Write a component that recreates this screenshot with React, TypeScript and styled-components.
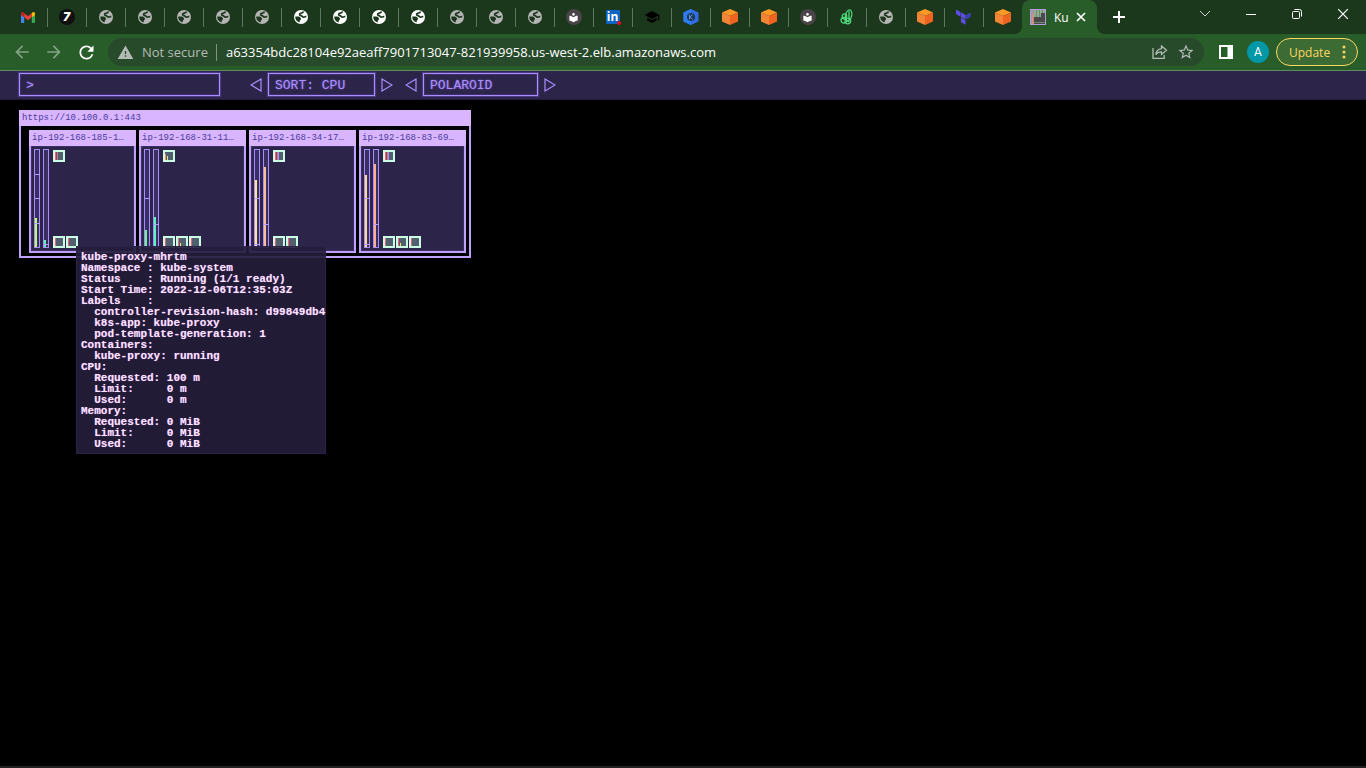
import React from "react";
import styled, { createGlobalStyle, css } from "styled-components";
import {
  MdArrowBack,
  MdArrowForward,
  MdLocalLibrary,
  MdRefresh,
  MdSchool,
  MdStarBorder,
  MdWarning,
} from "react-icons/md";

const GlobalStyle = createGlobalStyle`
  * { box-sizing: border-box; }
  html, body { margin: 0; background: #000; }
  button, input { font: inherit; color: inherit; background: none; border: 0; margin: 0; padding: 0; }
  button { cursor: pointer; }
  svg { display: block; flex: none; }
`;

const ui = `"Open Sans", "Noto Sans", sans-serif`;
const mono = `"Liberation Mono", "DejaVu Sans Mono", monospace`;

const Window = styled.div`
  min-height: 100vh;
  display: flex;
  flex-direction: column;
  font-family: ${ui};
  background: #000;
`;

/* ---------- browser tabs ---------- */

const TabStrip = styled.div`
  display: flex;
  height: 34px;
  padding-left: 8px;
  background: #1b381c;
`;

const Tab = styled.button<{ $last?: boolean }>`
  position: relative;
  flex: 0 1 39px;
  display: flex;
  align-items: center;
  justify-content: center;
  &::after {
    content: "";
    display: ${(p) => (p.$last ? "none" : "block")};
    position: absolute;
    right: -1px;
    top: 8px;
    width: 1px;
    height: 19px;
    background: #5d7a5e;
  }
`;

const corner = css`
  content: "";
  position: absolute;
  bottom: 0;
  width: 8px;
  height: 8px;
`;

const ActiveTab = styled.div`
  position: relative;
  display: flex;
  align-items: center;
  width: 75px;
  padding-left: 8px;
  border-radius: 8px 8px 0 0;
  background: #285d2a;
  color: #fff;
  font-size: 12px;
  &::before {
    ${corner}
    left: -8px;
    background: radial-gradient(circle at 0 0, transparent 8px, #285d2a 8px);
  }
  &::after {
    ${corner}
    right: -8px;
    background: radial-gradient(circle at 100% 0, transparent 8px, #285d2a 8px);
  }
`;

const TabTitle = styled.span`
  margin-left: 8px;
  width: 17px;
  white-space: nowrap;
`;

const TabIconButton = styled.button`
  display: flex;
  align-items: center;
  justify-content: center;
  width: 20px;
`;

const NewTab = styled.button`
  width: 28px;
  margin-left: 8px;
  display: flex;
  align-items: center;
  justify-content: center;
`;

const WindowButtons = styled.div`
  display: flex;
  margin-left: auto;
  height: 28px;
`;

const WindowButton = styled.button`
  width: 46px;
  display: flex;
  align-items: center;
  justify-content: center;
`;

const LinkedIn = styled.span`
  position: relative;
  width: 14px;
  height: 14px;
  border-radius: 1px;
  background: #0a66c2;
  color: #fff;
  font: bold 12px/14px "Open Sans", sans-serif;
  text-align: center;
  &::after {
    content: "";
    position: absolute;
    right: -1px;
    bottom: -1px;
    width: 4px;
    height: 4px;
    border-radius: 50%;
    background: #e01020;
  }
`;

const Disc = styled.span<{ $fill: string }>`
  width: 16px;
  height: 16px;
  border-radius: 50%;
  background: ${(p) => p.$fill};
  color: #fff;
  display: flex;
  align-items: center;
  justify-content: center;
  font: italic 900 12px/16px "Inter", sans-serif;
`;

/* ---------- browser toolbar ---------- */

const Toolbar = styled.div`
  display: flex;
  align-items: center;
  height: 37px;
  padding: 0 8px 0 6px;
  border-bottom: 1px solid #5d8a5f;
  background: #285d2a;
  color: #fff;
`;

const NavButton = styled.button<{ $dim?: boolean }>`
  width: 32px;
  height: 28px;
  display: flex;
  align-items: center;
  justify-content: center;
  color: ${(p) => (p.$dim ? "#82a283" : "#fff")};
`;

const AddressBar = styled.form`
  flex: 1;
  display: flex;
  align-items: center;
  height: 28px;
  margin: 0 6px;
  padding: 0 8px 0 9px;
  border-radius: 14px;
  background: #274a2a;
  color: #b4bbb6;
  font-size: 13px;
`;

const Security = styled.button`
  display: flex;
  align-items: center;
  gap: 8px;
  padding-right: 8px;
  margin-right: 9px;
  border-right: 1px solid #7f9481;
  line-height: 16px;
  white-space: nowrap;
`;

const Url = styled.input`
  flex: 1;
  min-width: 0;
  color: #fff;
  outline: 0;
`;

const AddressButton = styled.button`
  width: 32px;
  display: flex;
  justify-content: center;
  &:last-child {
    width: 20px;
  }
`;

const Avatar = styled.button`
  width: 22px;
  height: 22px;
  margin: 0 7px 0 5px;
  border-radius: 50%;
  background: #0097a7;
  font: 12px/22px Roboto, sans-serif;
  color: #fff;
`;

const UpdateButton = styled.button`
  display: flex;
  align-items: center;
  justify-content: space-between;
  width: 82px;
  height: 28px;
  padding: 0 11px 0 12px;
  border: 1px solid #fdd663;
  border-radius: 14px;
  background: #3c6b33;
  color: #fdd663;
  font-size: 12px;
`;

/* ---------- operational view ---------- */

const Menu = styled.div`
  display: flex;
  align-items: center;
  height: 29px;
  padding: 0 0 2px 19px;
  background: #2c2449;
  box-shadow: inset 0 -1px 0 #241c3c;
  font-family: ${mono};
  font-size: 13px;
  color: #aa8eff;
`;

const field = css`
  height: 23px;
  border: 1px solid #aa8eff;
  box-shadow: 0 0 1px 1px #4a3a80, inset 0 0 1px 1px #3f3270;
  text-shadow: 0 0 2px #7a5fd0;
  line-height: 21px;
  padding: 1px 6px 0;
`;

const Prompt = styled.input`
  && {
    ${field}
    width: 201px;
    margin-right: 28px;
    outline: 0;
  }
`;

const Picker = styled.div`
  display: flex;
  align-items: center;
  margin-right: 8px;
`;

const PickerValue = styled.output<{ $width: number }>`
  ${field}
  width: ${(p) => p.$width}px;
  margin: 0 4px;
`;

const Arrow = styled.button`
  display: flex;
  align-items: center;
  justify-content: center;
  width: 16px;
  height: 20px;
`;

const Board = styled.main`
  flex: 1;
  display: flex;
  align-items: flex-start;
  padding: 10px 19px;
  border-bottom: 2px solid #222;
  font-family: ${mono};
`;

const Cluster = styled.section`
  position: relative;
  border: 2px solid #c0a0ff;
  border-top: 0;
  background: #000;
`;

const Title = styled.h2`
  margin: 0 -2px;
  height: 16px;
  padding-left: 3px;
  background: #d9b5ff;
  color: #4b3c9e;
  font-size: 9px;
  font-weight: normal;
  line-height: 17px;
  white-space: nowrap;
`;

const Nodes = styled.div`
  display: flex;
  gap: 3px;
  padding: 4px 3px 3px 8px;
`;

const NodeBox = styled.section`
  width: 107px;
  border: 2px solid #c0a0ff;
  border-top: 0;
  background: #2c2449;
`;

const NodeBody = styled.div`
  display: flex;
  gap: 3px;
  height: 105px;
  padding: 3px;
  box-shadow: inset 0 0 0 1px #3b2f66;
`;

const PodArea = styled.div`
  display: flex;
  flex-direction: column;
  justify-content: space-between;
  padding: 1px 0 0 1px;
`;

const PodRow = styled.div`
  display: flex;
  gap: 1px;
`;

const Overlay = styled.pre`
  position: absolute;
  left: 55px;
  top: 136px;
  min-width: 250px;
  margin: 0;
  padding: 5px 0 3px 4px;
  border: 1px solid #2c2449e6;
  background: #241d3bea;
  color: #ffe4ff;
  font: bold 11px/11px ${mono};
  text-shadow: 0 0 1px #8a5fb0;
`;

/* ---------- icons ---------- */

const Globe = ({ color }: { color: string }) => (
  <svg width="14" height="14" viewBox="0 0 14 14">
    <circle cx="7" cy="7" r="7" fill={color} />
    <path
      d="M9.600 1.600C9.200 3 8 3.200 6.600 3.300 5.400 3.500 5.300 5.200 6.300 5.400 8 5.600 8.200 6.900 9.500 7.100 10.600 7.200 11.300 6.600 12.300 6.400"
      fill="none"
      stroke="#1b381c"
      strokeWidth="1.700"
    />
    <path d="M1.300 6.600H4.300C6 6.700 7.300 8 7 9.200 6.700 10 5.600 10 5.600 12.400 2.900 11.800 1 9.400 1.300 6.600z" fill="#1b381c" />
  </svg>
);

const Gmail = () => (
  <svg width="14" height="11" viewBox="0 0 14 11">
    <path d="M0 2v8.200q0 .8.8.8H3.200V4.400L0 2z" fill="#4285f4" />
    <path d="M14 2v8.200q0 .8-.8.8H10.800V4.400L14 2z" fill="#34a853" />
    <path d="M10.800 1.300v4L14 2.900V1.600C14 .1 12.400-.5 11.300.6z" fill="#fbbc04" />
    <path d="M3.200 5.300v-4L7 4.200l3.800-2.900v4L7 8.200z" fill="#ea4335" />
    <path d="M0 1.600v1.300l3.200 2.400v-4L2.700.6C1.600-.5 0 .1 0 1.600z" fill="#c5221f" />
  </svg>
);

const Cube = () => (
  <svg width="16" height="16" viewBox="0 0 16 16">
    <path d="M8 0l8 3.500L8 7 0 3.500z" fill="#fd9827" />
    <path d="M0 3.500L8 7v9l-8-3.500z" fill="#f58536" />
    <path d="M16 3.500L8 7v9l8-3.500z" fill="#ee6420" />
  </svg>
);

const Hexagon = () => (
  <svg width="16" height="16" viewBox="0 0 16 16">
    <path d="M8 0l7.500 3.500v9L8 16 .5 12.500v-9z" fill="#326ce5" />
    <path d="M8 0L.5 3.500v9L8 16v-4L4 9.800V6l4-2z" fill="#2f7df6" />
    <circle cx="8" cy="8" r="4" fill="#1b3c4c" />
    <path d="M6.500 5.500v5M9.800 5.500L7 8l2.800 2.500" stroke="#5b8def" fill="none" />
  </svg>
);

const Terraform = () => (
  <svg width="15" height="16" viewBox="0 0 15 16">
    <path d="M0 .5l4.500 2.600v4.600L0 5.100zM5 3.300l4.600 2.600v4.600L5 7.900zM5 8.600l4.600 2.600v4.600L5 13.200z" fill="#5c4ee5" />
    <path d="M10.100 5.900l4.500-2.600v4.600l-4.500 2.600z" fill="#4040b2" />
  </svg>
);

const Leaf = () => (
  <svg width="14" height="16" viewBox="0 0 14 16" fill="none" stroke="#4fd67c" strokeWidth="1.300">
    <ellipse cx="8.600" cy="6.500" rx="3" ry="5.800" transform="rotate(12 8.600 6.500)" />
    <circle cx="4.500" cy="7" r="2.200" />
    <circle cx="3.800" cy="11.300" r="2.800" />
    <circle cx="7.800" cy="12" r="2.800" />
    <path d="M9 2v10M2 9l7 4" />
  </svg>
);

const KubeFavicon = () => (
  <svg width="16" height="16" viewBox="0 0 16 16" shapeRendering="crispEdges">
    <path fill="#b39ddb" d="M0 0h16v16H0z" />
    <path fill="#4a4a4a" d="M1 1h14v14H1z" />
    <path fill="#a8949c" d="M1 1h3v14H1z" />
    <path fill="#f08a5a" d="M2 5h1v10H2z" />
    <path fill="#8fae92" d="M4 1h11v3H4zM4 4h7v4H4z" />
    <path fill="#6b8a6e" d="M6 1h1v7H6zM9 1h1v7H9zM12 1h1v3h-1zM4 13h11v1H4z" />
  </svg>
);

const Cross = ({ size, stroke }: { size: number; stroke: number }) => (
  <svg width={size} height={size} viewBox="0 0 10 10">
    <path d="M1 1l8 8M9 1l-8 8" stroke="#fff" strokeWidth={stroke} />
  </svg>
);

const Triangle = ({ right }: { right?: boolean }) => (
  <svg width="12" height="14" viewBox="0 0 12 14" fill="none" stroke="#aa8eff" strokeWidth="1.200">
    <path d={right ? "M1 1v12l10-6z" : "M11 1v12L1 7z"} />
  </svg>
);

const Meter = ({ level, color, ticks }: { level: number; color: string; ticks: number[] }) => (
  <svg width="6" height="99" viewBox="0 0 6 99" shapeRendering="crispEdges">
    <rect width="6" height="99" fill="#a98cff" />
    <rect x="1" y="1" width="4" height="97" fill="#3a2f63" />
    <rect x="1" y={98 - level} width="2" height={level} fill={color} />
    {ticks.map((t) => (
      <rect key={t} x="1" y={t} width="5" height="1" fill="#b79cff" />
    ))}
  </svg>
);

type PodBar = [x: number, height: number, color: string];

const Pod = ({ bars }: { bars: PodBar[] }) => (
  <svg width="12" height="12" viewBox="0 0 12 12" shapeRendering="crispEdges">
    <rect width="12" height="12" fill="#cbffe3" />
    <rect x="2" y="2" width="8" height="8" fill="#50606f" />
    {bars.map(([x, h, color]) => (
      <rect key={x} x={x} y={10 - h} width="1" height={h} fill={color} />
    ))}
  </svg>
);

/* ---------- data ---------- */

type NodeData = {
  name: string;
  cpu: { level: number; color: string; ticks: number[] };
  memory: { level: number; color: string; ticks: number[] };
  top: PodBar[];
  system: PodBar[][];
};

const red = "#ff5c7c";
const idle: PodBar[] = [[2, 8, red]];
const small: PodBar[] = [[2, 8, red], [4, 3, "#d8f060"]];

const nodes: NodeData[] = [
  {
    name: "ip-192-168-185-1…",
    cpu: { level: 29, color: "#b6ff6a", ticks: [25, 49, 74] },
    memory: { level: 7, color: "#5cf5c0", ticks: [95] },
    top: [[2, 8, red], [4, 8, red]],
    system: [idle, idle],
  },
  {
    name: "ip-192-168-31-11…",
    cpu: { level: 17, color: "#6cf58c", ticks: [49] },
    memory: { level: 30, color: "#5cf5c0", ticks: [75] },
    top: [[2, 6, "#f0907c"], [4, 4, "#f0e060"]],
    system: [idle, small, idle],
  },
  {
    name: "ip-192-168-34-17…",
    cpu: { level: 67, color: "#ffe98c", ticks: [49, 95] },
    memory: { level: 80, color: "#ffbf94", ticks: [75] },
    top: [[2, 8, red], [4, 8, red], [5, 8, "#b48cff"]],
    system: [idle, idle],
  },
  {
    name: "ip-192-168-83-69…",
    cpu: { level: 72, color: "#ffdc8c", ticks: [49, 95] },
    memory: { level: 83, color: "#ffae94", ticks: [75] },
    top: [[2, 8, red], [4, 8, red], [5, 8, "#b48cff"]],
    system: [idle, small, idle],
  },
];

const details = `kube-proxy-mhrtm
Namespace : kube-system
Status    : Running (1/1 ready)
Start Time: 2022-12-06T12:35:03Z
Labels    :
  controller-revision-hash: d99849db4
  k8s-app: kube-proxy
  pod-template-generation: 1
Containers:
  kube-proxy: running
CPU:
  Requested: 100 m
  Limit:     0 m
  Used:      0 m
Memory:
  Requested: 0 MiB
  Limit:     0 MiB
  Used:      0 MiB`;

const grayGlobe = <Globe color="#b4b4b4" />;
const whiteGlobe = <Globe color="#fff" />;
const reader = (
  <Disc $fill="#4a4348">
    <MdLocalLibrary size={11} />
  </Disc>
);

const tabs: [string, React.ReactNode][] = [
  ["Gmail", <Gmail />],
  ["7", <Disc $fill="#101010">7</Disc>],
  ...Array.from({ length: 5 }, (): [string, React.ReactNode] => ["Page", grayGlobe]),
  ...Array.from({ length: 4 }, (): [string, React.ReactNode] => ["Page", whiteGlobe]),
  ...Array.from({ length: 3 }, (): [string, React.ReactNode] => ["Page", grayGlobe]),
  ["Reader", reader],
  ["LinkedIn", <LinkedIn>in</LinkedIn>],
  ["School", <MdSchool size={16} color="#000" />],
  ["Kubernetes", <Hexagon />],
  ["AWS", <Cube />],
  ["AWS", <Cube />],
  ["Reader", reader],
  ["Leaf", <Leaf />],
  ["Page", grayGlobe],
  ["AWS", <Cube />],
  ["Terraform", <Terraform />],
  ["AWS", <Cube />],
];

const Stepper = ({ label, value, width }: { label: string; value: string; width: number }) => (
  <Picker>
    <Arrow aria-label={`Previous ${label}`}>
      <Triangle />
    </Arrow>
    <PickerValue $width={width}>{value}</PickerValue>
    <Arrow aria-label={`Next ${label}`}>
      <Triangle right />
    </Arrow>
  </Picker>
);

export default function App() {
  return (
    <Window>
      <GlobalStyle />
      <TabStrip>
        {tabs.map(([label, icon], i) => (
          <Tab key={i} aria-label={label} $last={i === tabs.length - 1}>
            {icon}
          </Tab>
        ))}
        <ActiveTab>
          <KubeFavicon />
          <TabTitle>Ku</TabTitle>
          <TabIconButton aria-label="Close tab">
            <Cross size={10} stroke={1.7} />
          </TabIconButton>
        </ActiveTab>
        <NewTab aria-label="New tab">
          <svg width="12" height="12" viewBox="0 0 12 12">
            <path d="M6 0v12M0 6h12" stroke="#fff" strokeWidth="2" />
          </svg>
        </NewTab>
        <WindowButtons>
          <WindowButton aria-label="Search tabs">
            <svg width="12" height="8" viewBox="0 0 12 8">
              <path d="M1 1l5 5 5-5" fill="none" stroke="#c8d2c8" />
            </svg>
          </WindowButton>
          <WindowButton aria-label="Minimize">
            <svg width="10" height="1" viewBox="0 0 10 1">
              <path d="M0 .5h10" stroke="#fff" />
            </svg>
          </WindowButton>
          <WindowButton aria-label="Restore">
            <svg width="10" height="10" viewBox="0 0 10 10" fill="none" stroke="#fff">
              <rect x=".5" y="2.500" width="7" height="7" rx="1" />
              <path d="M2.500 .5H7.500Q9.500 .5 9.500 2.500V7.500" />
            </svg>
          </WindowButton>
          <WindowButton aria-label="Close">
            <Cross size={12} stroke={1} />
          </WindowButton>
        </WindowButtons>
      </TabStrip>

      <Toolbar>
        <NavButton aria-label="Back" $dim>
          <MdArrowBack size={20} />
        </NavButton>
        <NavButton aria-label="Forward" $dim>
          <MdArrowForward size={20} />
        </NavButton>
        <NavButton aria-label="Reload">
          <MdRefresh size={21} />
        </NavButton>
        <AddressBar onSubmit={(e) => e.preventDefault()}>
          <Security type="button">
            <MdWarning size={17} />
            Not secure
          </Security>
          <Url
            aria-label="Address"
            defaultValue="a63354bdc28104e92aeaff7901713047-821939958.us-west-2.elb.amazonaws.com"
          />
          <AddressButton type="button" aria-label="Share">
            <svg width="16" height="14" viewBox="0 0 16 14" fill="none" stroke="#b4bbb6" strokeWidth="1.300">
              <path d="M1 3v10.300h11.200V10" />
              <path d="M9.500 1l5 4.200-5 4.200V6.900C6.800 6.900 5 7.800 3.800 9.600 4.200 6.200 6.200 4 9.500 3.600z" />
            </svg>
          </AddressButton>
          <AddressButton type="button" aria-label="Bookmark">
            <MdStarBorder size={18} />
          </AddressButton>
        </AddressBar>
        <NavButton aria-label="Side panel">
          <svg width="14" height="14" viewBox="0 0 14 14">
            <path d="M0 0h14v14H0zM2 2v10h6.500V2z" fill="#fff" fillRule="evenodd" />
          </svg>
        </NavButton>
        <Avatar>A</Avatar>
        <UpdateButton>
          Update
          <svg width="4" height="14" viewBox="0 0 4 14" fill="#fdd663">
            <circle cx="2" cy="2" r="1.500" />
            <circle cx="2" cy="7" r="1.500" />
            <circle cx="2" cy="12" r="1.500" />
          </svg>
        </UpdateButton>
      </Toolbar>

      <Menu>
        <Prompt aria-label="Filter" defaultValue=">" />
        <Stepper label="sort order" value="SORT: CPU" width={107} />
        <Stepper label="theme" value="POLAROID" width={115} />
      </Menu>

      <Board>
        <Cluster>
          <Title>https://10.100.0.1:443</Title>
          <Nodes>
            {nodes.map((n) => (
              <NodeBox key={n.name}>
                <Title as="h3">{n.name}</Title>
                <NodeBody>
                  <Meter {...n.cpu} />
                  <Meter {...n.memory} />
                  <PodArea>
                    <PodRow>
                      <Pod bars={n.top} />
                    </PodRow>
                    <PodRow>
                      {n.system.map((bars, i) => (
                        <Pod key={i} bars={bars} />
                      ))}
                    </PodRow>
                  </PodArea>
                </NodeBody>
              </NodeBox>
            ))}
          </Nodes>
          <Overlay role="tooltip">{details}</Overlay>
        </Cluster>
      </Board>
    </Window>
  );
}
